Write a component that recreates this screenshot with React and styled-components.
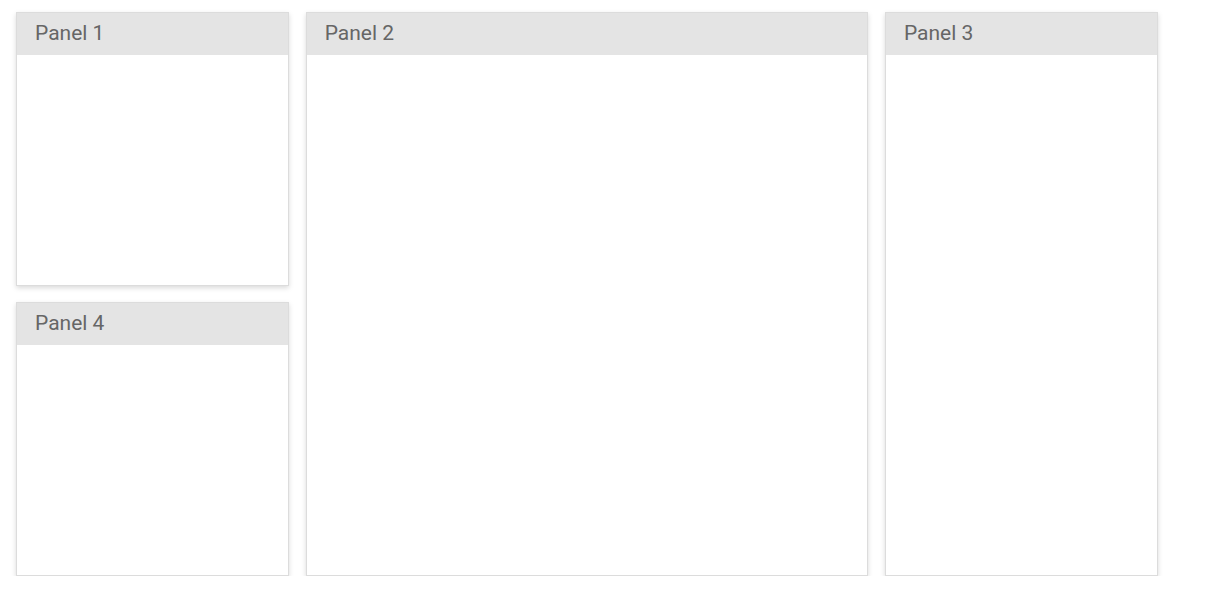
import React from "react";
import styled, { createGlobalStyle } from "styled-components";

const Global = createGlobalStyle`
  html, body { margin: 0; padding: 0; background: #fff; }
  body { font-family: Roboto, "Noto Sans", sans-serif; }
`;

const Board = styled.div`
  display: grid;
  grid-template-columns: repeat(4, 273px);
  grid-template-rows: repeat(2, 274px);
  column-gap: 16.67px;
  row-gap: 16px;
  padding: 12px 0 0 16px;
`;

const Panel = styled.div`
  grid-column: ${(p) => p.$col} / span ${(p) => p.$colSpan || 1};
  grid-row: ${(p) => p.$row} / span ${(p) => p.$rowSpan || 1};
  background: #fff;
  border: 1px solid #dcdcdc;
  box-shadow: 0 2px 5px rgba(0, 0, 0, 0.15);
  display: flex;
  flex-direction: column;
  box-sizing: border-box;
`;

const Header = styled.div`
  height: 42px;
  background: #e4e4e4;
  padding: 8px 18px 0 18px;
  font-size: 21px;
  line-height: 24px;
  color: #666666;
  box-sizing: border-box;
`;

const Body = styled.div`
  flex: 1;
`;

const panels = [
  { id: 1, col: 1, row: 1 },
  { id: 2, col: 2, row: 1, colSpan: 2, rowSpan: 2 },
  { id: 3, col: 4, row: 1, rowSpan: 2 },
  { id: 4, col: 1, row: 2 },
];

export default function App() {
  return (
    <>
      <Global />
      <Board>
        {panels.map((p) => (
          <Panel key={p.id} $col={p.col} $row={p.row} $colSpan={p.colSpan} $rowSpan={p.rowSpan}>
            <Header>Panel {p.id}</Header>
            <Body />
          </Panel>
        ))}
      </Board>
    </>
  );
}
